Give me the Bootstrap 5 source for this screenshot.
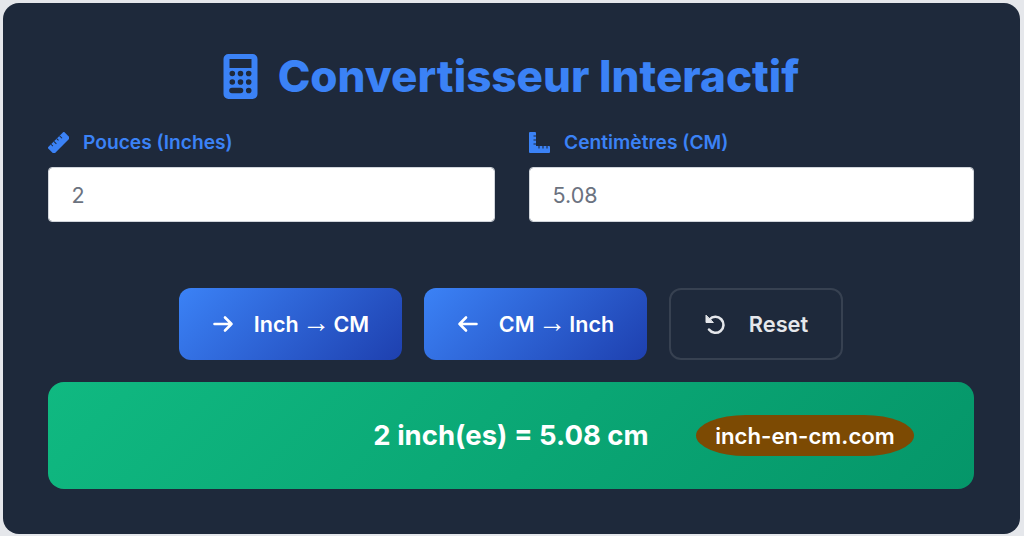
<!DOCTYPE html>
<html lang="fr">
<head>
  <meta charset="UTF-8">
  <title>Convertisseur Interactif</title>
  <link href="https://cdn.jsdelivr.net/npm/bootstrap@5.3.3/dist/css/bootstrap.min.css" rel="stylesheet">
  <style>
    html, body { height: 100%; }
    body { background: #e5e7eb; font-family: "Inter", "Liberation Sans", sans-serif; padding: 3px 4px 2px 3px; overflow: hidden; }
    .conv-panel { background: #1e293b; border-radius: 16px; height: 531px; padding: 45px 46px 45px 45px; }
    .conv-title { color: #3b82f6; font-size: 44px; font-weight: 800; line-height: 56px; height: 56px; margin: 0 0 24px; gap: 20px; }
    .conv-title svg { width: 35px; height: 45px; }
    .conv-label { color: #3b82f6; font-size: 19.2px; font-weight: 600; line-height: 28px; margin-bottom: 11px; gap: 14px; }
    .conv-label svg { width: 21px; height: 21px; }
    .conv-fields { gap: 34px; margin-bottom: 66px; }
    .conv-field-l { flex: 0 0 447px; }
    .conv-field-r { flex: 0 0 445px; }
    .conv-input.form-control { height: 55px; border-radius: 4px; font-size: 21.5px; color: #6b7280; padding: 0 22.5px; border: 1px solid #d1d5db; }
    .conv-actions { gap: 22px; margin-bottom: 22px; }
    .conv-btn.btn { height: 72px; border-radius: 12px; color: #fff; font-size: 21.5px; font-weight: 600; gap: 20px; padding: 0; border: 0; }
    .conv-btn svg { width: 22px; height: 22px; }
    .conv-arrow { font-family: "Liberation Sans", sans-serif; font-weight: 400; font-size: 28px; line-height: 0; margin: 0 -2px; }
    .conv-fwd.btn { width: 223px; background: linear-gradient(135deg, #3b82f6, #1e40af); }
    .conv-reset.btn { width: 174px; background: transparent; border: 2px solid #374151; color: #e5e7eb; font-size: 21.8px; gap: 23px; }
    .conv-result { height: 107px; border-radius: 16px; background: linear-gradient(135deg, #10b981, #059669); color: #fff; font-size: 27.5px; font-weight: 700; }
    .conv-pill { right: 60px; top: 33px; width: 218px; height: 41px; border-radius: 50px / 50%; background: #7c4a03; font-size: 22.2px; font-weight: 600; }
  </style>
</head>
<body>
  <div class="conv-panel">
    <h1 class="conv-title d-flex justify-content-center align-items-center">
      <svg viewBox="0 0 34 45"><path fill="#3b82f6" fill-rule="evenodd" d="M5 0h24a5 5 0 0 1 5 5v35a5 5 0 0 1-5 5H5a5 5 0 0 1-5-5V5a5 5 0 0 1 5-5zM6 5v9h22V5zM6 19.500a2.800 2.800 0 1 0 5.600 0a2.800 2.800 0 1 0-5.600 0zM14.200 19.500a2.800 2.800 0 1 0 5.600 0a2.800 2.800 0 1 0-5.600 0zM22.400 19.500a2.800 2.800 0 1 0 5.600 0a2.800 2.800 0 1 0-5.600 0zM6 28a2.800 2.800 0 1 0 5.600 0a2.800 2.800 0 1 0-5.600 0zM14.200 28a2.800 2.800 0 1 0 5.600 0a2.800 2.800 0 1 0-5.600 0zM22.400 28a2.800 2.800 0 1 0 5.600 0a2.800 2.800 0 1 0-5.600 0zM8.500 33.700a2.800 2.800 0 0 0 0 5.600h8.500a2.800 2.800 0 0 0 0-5.600zM22.400 36.500a2.800 2.800 0 1 0 5.600 0a2.800 2.800 0 1 0-5.600 0z"/></svg>
      <span>Convertisseur Interactif</span>
    </h1>
    <div class="conv-fields d-flex">
      <div class="conv-field-l">
        <label class="conv-label d-flex align-items-center">
          <svg viewBox="0 0 21 21"><g transform="rotate(-45 10.500 10.500)"><path fill="#3b82f6" d="M0 6.500h21a1 1 0 0 1 1 1v7a1 1 0 0 1-1 1H0a1 1 0 0 1-1-1v-7a1 1 0 0 1 1-1z"/><path stroke="#1e293b" stroke-width="1" d="M4 6.500v2.500M8 6.500v3.500M12 6.500v2.500M16 6.500v3.500"/></g></svg>
          <span>Pouces (Inches)</span>
        </label>
        <input type="text" class="form-control conv-input" value="2">
      </div>
      <div class="conv-field-r">
        <label class="conv-label d-flex align-items-center">
          <svg viewBox="0 0 21 21"><path fill="#3b82f6" d="M0 1a1 1 0 0 1 1-1h5a1 1 0 0 1 1 1v13h13a1 1 0 0 1 1 1v5a1 1 0 0 1-1 1H1a1 1 0 0 1-1-1z"/><path stroke="#1e293b" stroke-width="1.100" d="M4.500 4H7M4.500 8H7M4.500 12H7M10 14v2.500M14 14v2.500M18 14v2.500"/></svg>
          <span>Centimètres (CM)</span>
        </label>
        <input type="text" class="form-control conv-input" value="5.08">
      </div>
    </div>
    <div class="conv-actions d-flex justify-content-center">
      <button class="btn conv-btn conv-fwd d-flex justify-content-center align-items-center">
        <svg viewBox="0 0 22 22" fill="none" stroke="#fff" stroke-width="2.600" stroke-linecap="round" stroke-linejoin="round"><path d="M2.500 11h17M13 4.500l6.500 6.500L13 17.500"/></svg>
        <span>Inch <span class="conv-arrow">→</span> CM</span>
      </button>
      <button class="btn conv-btn conv-fwd d-flex justify-content-center align-items-center">
        <svg viewBox="0 0 22 22" fill="none" stroke="#fff" stroke-width="2.600" stroke-linecap="round" stroke-linejoin="round"><path d="M19.500 11h-17M9 4.500L2.500 11 9 17.500"/></svg>
        <span>CM <span class="conv-arrow">→</span> Inch</span>
      </button>
      <button class="btn conv-btn conv-reset d-flex justify-content-center align-items-center">
        <svg viewBox="0 0 22 22" fill="none" stroke="#e5e7eb" stroke-width="2.600" stroke-linecap="round" stroke-linejoin="round"><path d="M5.500 6.500A8 8 0 1 1 5 16.500"/><path fill="#e5e7eb" stroke-width="1" d="M2 2.500v7h7z"/></svg>
        <span>Reset</span>
      </button>
    </div>
    <div class="conv-result position-relative d-flex justify-content-center align-items-center">
      <span>2 inch(es) = 5.08 cm</span>
      <span class="conv-pill position-absolute d-flex justify-content-center align-items-center">inch-en-cm.com</span>
    </div>
  </div>
</body>
</html>
